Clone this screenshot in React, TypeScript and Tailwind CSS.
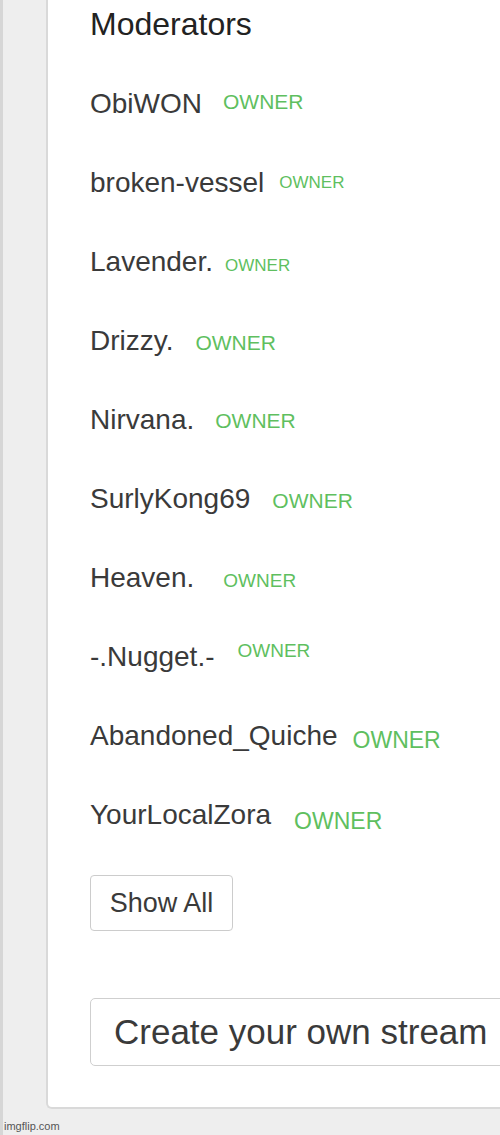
const mods = [
  { name: "ObiWON", ml: "ml-[21px]", size: "text-[21px]", shift: "-top-[4px]" },
  { name: "broken-vessel", ml: "ml-[15px]", size: "text-[17px]", shift: "-top-[4px]" },
  { name: "Lavender.", ml: "ml-[12px]", size: "text-[17px]", shift: "top-0" },
  { name: "Drizzy.", ml: "ml-[22px]", size: "text-[21px]", shift: "top-0" },
  { name: "Nirvana.", ml: "ml-[21px]", size: "text-[21px]", shift: "-top-[1px]" },
  { name: "SurlyKong69", ml: "ml-[22px]", size: "text-[21px]", shift: "top-0" },
  { name: "Heaven.", ml: "ml-[29px]", size: "text-[19px]", shift: "top-0" },
  { name: "-.Nugget.-", ml: "ml-[23px]", size: "text-[19px]", shift: "-top-[9px]" },
  { name: "Abandoned_Quiche", ml: "ml-[15px]", size: "text-[23px]", shift: "top-[3px]" },
  { name: "YourLocalZora", ml: "ml-[23px]", size: "text-[23px]", shift: "top-[5px]" },
];

export default function App() {
  return (
    <div className="relative h-[1135px] w-[500px] overflow-hidden border-l-[3px] border-[#d6d6d6] bg-[#eeeeee] font-['Liberation_Sans',Arial,sans-serif]">
      {/* moderators panel */}
      <div className="ml-[43px] w-[500px] rounded-bl-[6px] border-b-2 border-l-2 border-[#d9d9d9] bg-white pb-[41px] pl-[42px] pt-[4px]">
        <h3 className="text-[32px] leading-[40px] text-[#222]">Moderators</h3>

        <div className="mt-[20px]">
          {mods.map((m) => (
            <div key={m.name} className="flex h-[79px] items-baseline">
              <span className="text-[28px] leading-[79px] text-[#3a3a3a]">{m.name}</span>
              <span className={`relative leading-none ${m.ml} ${m.size} ${m.shift} text-[#5fbf5f]`}>
                OWNER
              </span>
            </div>
          ))}
        </div>

        <button className="mt-[21px] flex h-[56px] w-[143px] items-center justify-center rounded-[4px] border border-[#cccccc] bg-white text-[27px] text-[#3a3a3a]">
          Show All
        </button>

        <button className="mt-[67px] flex h-[68px] w-[440px] items-center rounded-[5px] border border-[#cfcfcf] bg-white pl-[23px] text-[35px] text-[#3a3a3a]">
          Create your own stream
        </button>
      </div>

      <div className="absolute bottom-[2px] left-[1px] text-[11px] leading-[14px] text-[#555]">
        imgflip.com
      </div>
    </div>
  );
}
